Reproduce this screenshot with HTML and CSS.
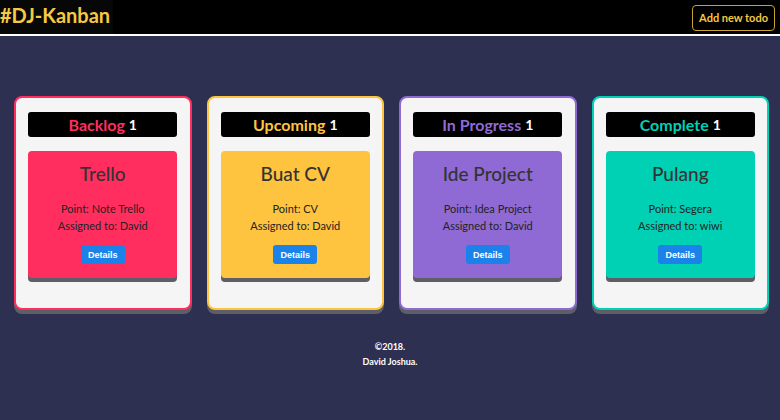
FILE: index.html
```html
<!DOCTYPE html>
<html>
<head>
<meta charset="utf-8">
<link rel="stylesheet" href="styles.css">
</head>
<body>
<header class="topbar">
  <div class="logo">#DJ-Kanban</div>
  <button class="add-btn">Add new todo</button>
</header>
<main class="board">
  <section class="column backlog">
    <div class="col-head"><span class="col-title">Backlog</span> <span class="count">1</span></div>
    <div class="card">
      <h2 class="card-title">Trello</h2>
      <p class="card-line">Point: Note Trello</p>
      <p class="card-line">Assigned to: David</p>
      <button class="details">Details</button>
    </div>
  </section>
  <section class="column upcoming">
    <div class="col-head"><span class="col-title">Upcoming</span> <span class="count">1</span></div>
    <div class="card">
      <h2 class="card-title">Buat CV</h2>
      <p class="card-line">Point: CV</p>
      <p class="card-line">Assigned to: David</p>
      <button class="details">Details</button>
    </div>
  </section>
  <section class="column progress">
    <div class="col-head"><span class="col-title">In Progress</span> <span class="count">1</span></div>
    <div class="card">
      <h2 class="card-title">Ide Project</h2>
      <p class="card-line">Point: Idea Project</p>
      <p class="card-line">Assigned to: David</p>
      <button class="details">Details</button>
    </div>
  </section>
  <section class="column complete">
    <div class="col-head"><span class="col-title">Complete</span> <span class="count">1</span></div>
    <div class="card">
      <h2 class="card-title">Pulang</h2>
      <p class="card-line">Point: Segera</p>
      <p class="card-line">Assigned to: wiwi</p>
      <button class="details">Details</button>
    </div>
  </section>
</main>
<footer class="foot">
  <div>©2018.</div>
  <div>David Joshua.</div>
</footer>
</body>
</html>
```
FILE: styles.css
```css
html, body {
  margin: 0;
  padding: 0;
}
body {
  background: #2e3052;
  font-family: "Lato", "Open Sans", sans-serif;
  width: 780px;
  height: 420px;
  overflow: hidden;
}
.topbar {
  height: 34px;
  background: #000;
  border-bottom: 2px solid #fff;
  display: flex;
  align-items: center;
  justify-content: space-between;
  padding-right: 5px;
}
.logo {
  background: #070707;
  height: 34px;
  line-height: 30px;
  color: #f7c940;
  font-weight: 700;
  font-size: 20px;
  padding-right: 3px;
}
.add-btn {
  font-family: inherit;
  background: #000;
  color: #f7c940;
  border: 1px solid #c9a22e;
  border-radius: 4px;
  font-weight: 700;
  font-size: 11px;
  height: 26px;
  padding: 0 6px;
  margin-top: 1px;
}
.board {
  display: flex;
  gap: 15px;
  padding: 60px 0 0 14px;
}
.column {
  width: 173.5px;
  height: 210px;
  box-sizing: content-box;
  background: #f5f5f5;
  border: 2px solid;
  border-radius: 8px;
  box-shadow: 0 4px 0 #5e5e66;
  padding: 0;
  display: flex;
  flex-direction: column;
  align-items: center;
}
.backlog { border-color: #ff2e5f; }
.upcoming { border-color: #ffc43f; }
.progress { border-color: #8f6ad4; }
.complete { border-color: #00d1b5; }
.backlog .col-title { color: #ff2e5f; }
.upcoming .col-title { color: #ffc43f; }
.progress .col-title { color: #8f6ad4; }
.complete .col-title { color: #00d1b5; }
.backlog .card { background: #ff2e5f; }
.upcoming .card { background: #ffc43f; }
.progress .card { background: #8f6ad4; }
.complete .card { background: #00d1b5; }
.col-head {
  margin-top: 14px;
  width: 149px;
  height: 25px;
  background: #000;
  border-radius: 3px;
  display: flex;
  align-items: center;
  justify-content: center;
  gap: 4px;
  font-weight: 700;
  font-size: 16px;
}
.count {
  color: #fff;
  font-size: 14px;
}
.card {
  margin-top: 14px;
  width: 149px;
  height: 127px;
  border-radius: 4px;
  box-shadow: 0 4px 0 #5e5e66;
  display: flex;
  flex-direction: column;
  align-items: center;
}
.card-title {
  margin: 12px 0 15px;
  font-size: 19px;
  font-weight: 500;
  color: #333;
  line-height: 22px;
}
.card-line {
  margin: 0;
  font-size: 11px;
  line-height: 17px;
  color: #222;
}
.details {
  margin-top: 11px;
  background: #1a82e8;
  color: #fff;
  border: none;
  border-radius: 3px;
  font-family: "Liberation Sans", Arial, sans-serif;
  font-weight: 700;
  font-size: 9px;
  height: 19px;
  padding: 0 7px;
}
.foot {
  margin-top: 29px;
  text-align: center;
  color: #fff;
  font-weight: 700;
  font-size: 9px;
  line-height: 15px;
}
```
